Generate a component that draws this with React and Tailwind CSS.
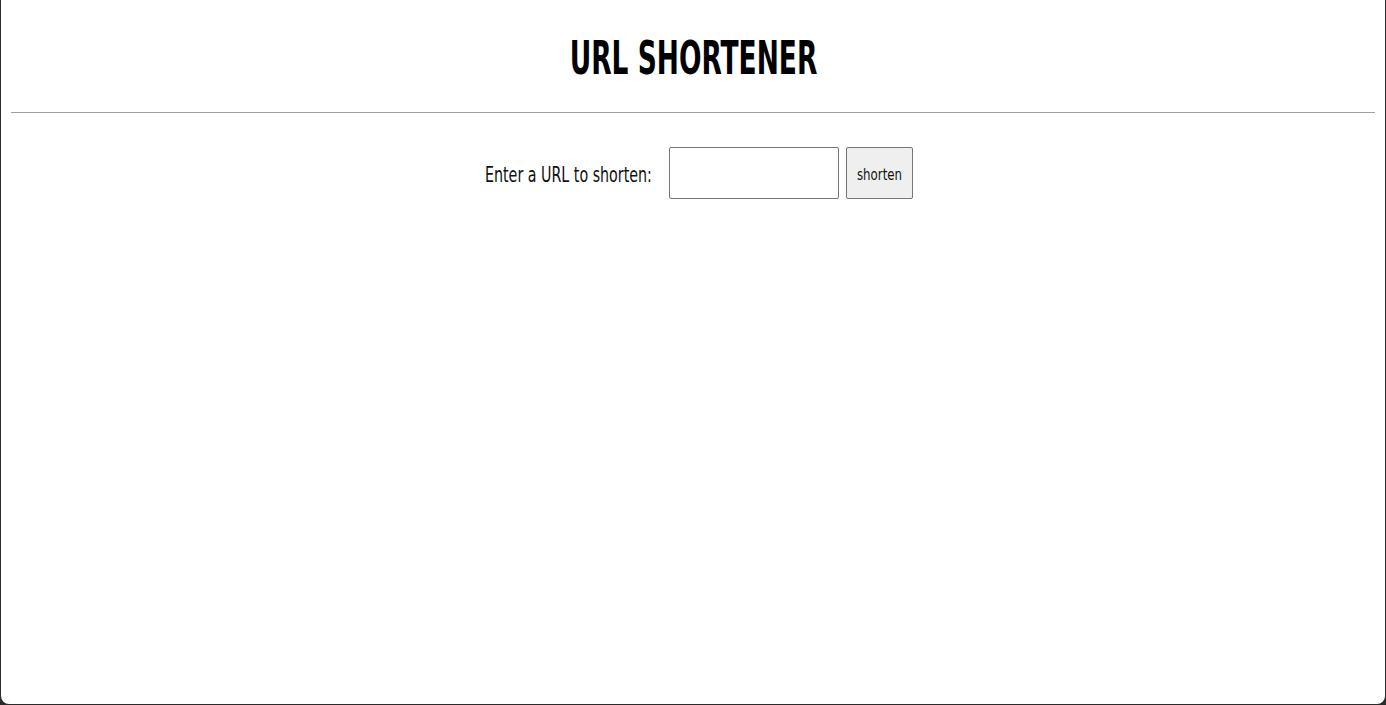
import React, { useState } from 'react';

const font = { fontFamily: '"DejaVu Sans Condensed", "Liberation Sans", sans-serif' };

export default function App() {
    const [url, setUrl] = useState('');

    return (
        <div className="h-[705px] w-full bg-[#2b2b2b] px-px pb-px">
            <div className="h-full bg-white rounded-b-[8px] flex flex-col text-black" style={font}>
                {/* Header - condensed look, squeezed horizontally */}
                <h1 className="pt-[30px] pb-[26px] text-center text-[46px] leading-[56px] font-bold">
                    <span className="inline-block whitespace-nowrap scale-x-[0.64]">URL SHORTENER</span>
                </h1>
                <hr className="mx-[10px] border-0 border-t border-[#a0a0a0]" />

                {/* Form */}
                <div className="mt-[34px] pl-[11px] flex items-center justify-center">
                    <label className="w-[167px] mr-[17px] mt-[4px] whitespace-nowrap text-[22px] leading-[30px] text-[#111]">
                        <span className="inline-block origin-left scale-x-[0.72]">Enter a URL to shorten:</span>
                    </label>
                    <input
                        type="text"
                        value={url}
                        onChange={(e) => setUrl(e.target.value)}
                        className="w-[170px] h-[52px] border border-[#767676] rounded-[2px] bg-white outline-none px-2"
                    />
                    <button className="ml-[7px] w-[67px] h-[52px] pt-[4px] border border-[#767676] rounded-[2px] bg-[#efefef] text-[16px] text-[#111] whitespace-nowrap">
                        <span className="inline-block scale-x-[0.82]">shorten</span>
                    </button>
                </div>
            </div>
        </div>
    );
}
